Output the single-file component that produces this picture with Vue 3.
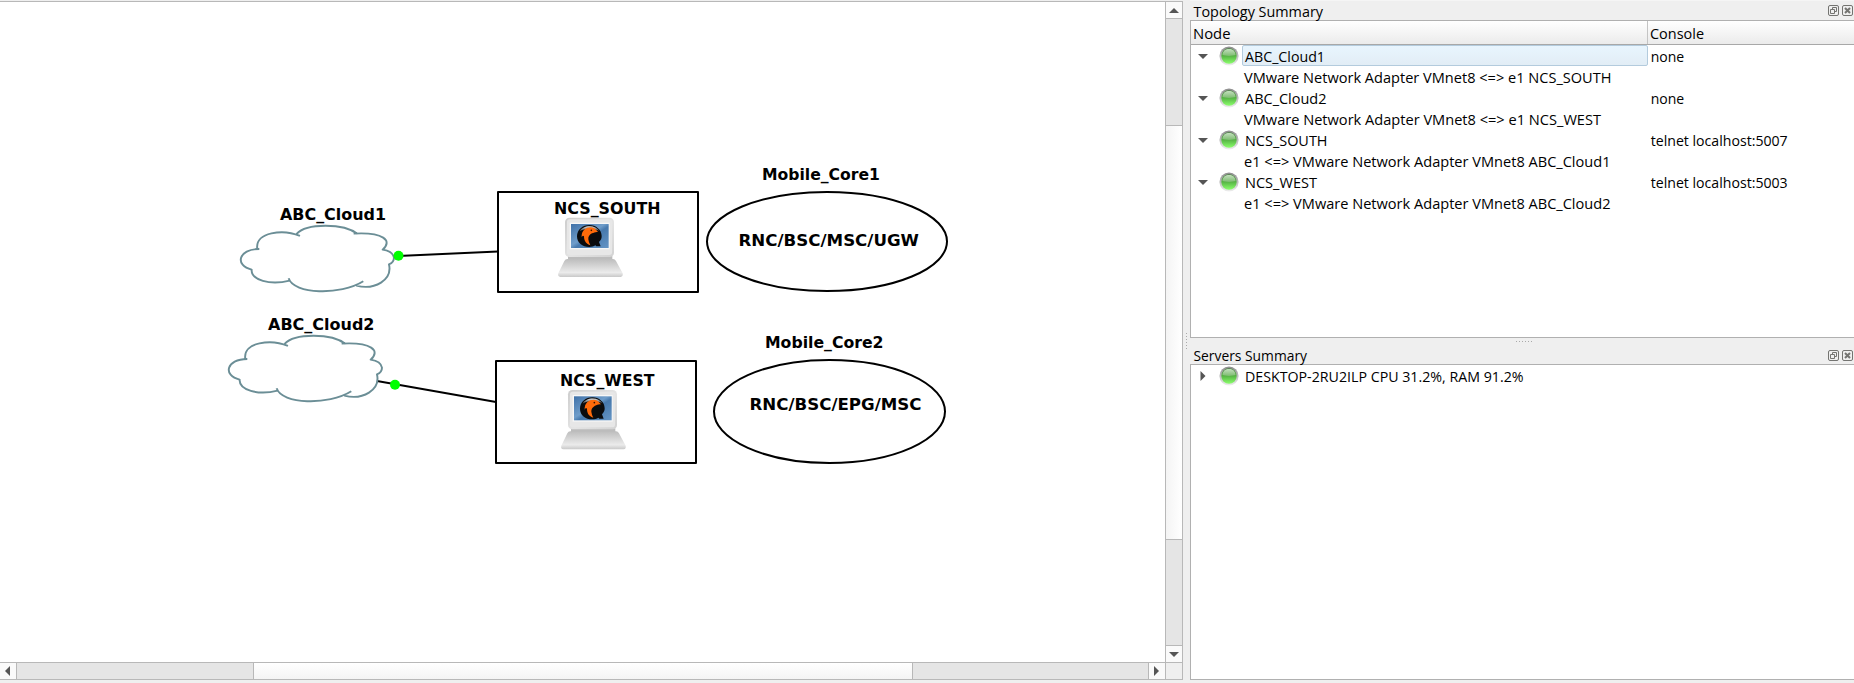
<script setup>
const topology = [
  { node: 'ABC_Cloud1', w: 80, console: 'none', cw: 33.5, selected: true },
  { link: 'VMware Network Adapter VMnet8 <=> e1 NCS_SOUTH', w: 367.5 },
  { node: 'ABC_Cloud2', w: 81.5, console: 'none', cw: 33.5 },
  { link: 'VMware Network Adapter VMnet8 <=> e1 NCS_WEST', w: 357 },
  { node: 'NCS_SOUTH', w: 82.5, console: 'telnet localhost:5007', cw: 137 },
  { link: 'e1 <=> VMware Network Adapter VMnet8 ABC_Cloud1', w: 366.5 },
  { node: 'NCS_WEST', w: 72, console: 'telnet localhost:5003', cw: 137 },
  { link: 'e1 <=> VMware Network Adapter VMnet8 ABC_Cloud2', w: 366.5 },
]
const labels = [
  { t: 'ABC_Cloud1', x: 280, y: 220, w: 106 },
  { t: 'ABC_Cloud2', x: 268, y: 330, w: 106.5 },
  { t: 'NCS_SOUTH', x: 554, y: 214, w: 106.5 },
  { t: 'NCS_WEST', x: 560, y: 386, w: 94.5 },
  { t: 'Mobile_Core1', x: 762, y: 180, w: 118 },
  { t: 'Mobile_Core2', x: 765, y: 348, w: 118.5 },
  { t: 'RNC/BSC/MSC/UGW', x: 738.5, y: 246, w: 180.5 },
  { t: 'RNC/BSC/EPG/MSC', x: 749.5, y: 410, w: 172 },
]
const clouds = [[220.3, 190.3], [208.3, 300.3]]
const computers = [[485, 180], [488, 352.3]]
</script>

<template>
  <div class="window">
    <svg class="defs" width="0" height="0" aria-hidden="true">
      <defs>
        <linearGradient id="ring" x1="0" y1="0" x2="0" y2="1">
          <stop offset="0" stop-color="#8c8c8c" /><stop offset=".5" stop-color="#bcbcbc" /><stop offset="1" stop-color="#efefef" />
        </linearGradient>
        <linearGradient id="bulb" x1="0" y1="0" x2="0" y2="1">
          <stop offset="0" stop-color="#3f7f36" /><stop offset=".5" stop-color="#57b545" /><stop offset="1" stop-color="#8bff6c" />
        </linearGradient>
        <linearGradient id="shine" x1="0" y1="0" x2="0" y2="1">
          <stop offset="0" stop-color="#c4dfbf" /><stop offset="1" stop-color="#7dbc70" />
        </linearGradient>
        <symbol id="led" viewBox="0 0 20 20">
          <circle cx="10" cy="10" r="9.6" fill="url(#ring)" />
          <circle cx="10" cy="10" r="7.7" fill="url(#bulb)" />
          <path d="M3.400 8.800C3.800 4.600 6.500 2.900 10 2.900S16.200 4.600 16.600 8.800C14.500 10.300 5.500 10.300 3.400 8.800Z" fill="url(#shine)" />
        </symbol>
        <symbol id="dock" viewBox="0 0 25 11">
          <g fill="none" stroke="#747471" stroke-width="1">
            <rect x=".5" y=".5" width="10" height="10" rx="1.500" />
            <rect x="14.500" y=".5" width="10" height="10" rx="1.500" />
            <path d="M4.500 4.500V2.500H8.500V6.500H6.500M2.500 4.500H6.500V8.500H2.500Z" />
            <path d="M17 3L22 8M22 3L17 8" stroke-width="2" />
          </g>
        </symbol>
      </defs>
    </svg>

    <main class="view">
      <svg class="scene" width="1165" height="660" viewBox="0 2 1165 660">
        <defs>
          <linearGradient id="case" x1="0" y1="0" x2="1" y2="1">
            <stop offset="0" stop-color="#cdcdcd" /><stop offset=".55" stop-color="#e4e4e4" /><stop offset="1" stop-color="#d2d2d2" />
          </linearGradient>
          <linearGradient id="base" x1="0" y1="0" x2="0" y2="1">
            <stop offset="0" stop-color="#bdbdbd" /><stop offset=".75" stop-color="#ebebeb" /><stop offset="1" stop-color="#c8c8c8" />
          </linearGradient>
          <linearGradient id="screen" x1="0" y1="0" x2="1" y2="1">
            <stop offset="0" stop-color="#3f71a8" /><stop offset=".45" stop-color="#6f9dca" /><stop offset=".55" stop-color="#4779ad" /><stop offset="1" stop-color="#6595c5" />
          </linearGradient>
          <linearGradient id="gloss" x1="0" y1="0" x2="0" y2="1">
            <stop offset="0" stop-color="#e8e8e8" /><stop offset="1" stop-color="#333" />
          </linearGradient>
        </defs>

        <g class="links">
          <path d="M398 256L498 251.500" />
          <path d="M377 381L496 402" />
        </g>
        <g class="shapes">
          <rect x="498" y="192" width="200" height="100" />
          <rect x="496" y="361" width="200" height="102" />
          <ellipse cx="827" cy="241.500" rx="120" ry="49.500" />
          <ellipse cx="829.500" cy="411.500" rx="115.500" ry="51.500" />
        </g>

        <g v-for="(c, i) in clouds" :key="i" :transform="`translate(${c[0]} ${c[1]}) scale(.33333)`">
          <path class="cloud" d="M117 176C53 176 43 226 94 238C92 269 148 286 208 271M205 264C220 312 360 316 429 273M408 286C464 300 517 269 506 222Q521 216 521 202Q518 183 487 178C518 151 489 125 400 130M412 131C370 98 258 98 229 131M239 137C190 116 103 124 111 176" />
        </g>
        <circle cx="398.500" cy="255.700" r="5" fill="#0f0" />
        <circle cx="395" cy="384.700" r="5" fill="#0f0" />

        <g v-for="(c, i) in computers" :key="'pc' + i" :transform="`translate(${c[0]} ${c[1]}) scale(.33333)`">
          <path d="M249 228H382V239H249Z" fill="#bcbcbc" />
          <path d="M247 237H384Q390 237 393 243L413 280Q415 290 407 291H226Q217 290 220 280L238 243Q241 237 247 237Z" fill="url(#base)" />
          <rect x="240" y="113" width="147" height="118" rx="13" fill="url(#case)" />
          <rect x="246" y="118" width="135" height="107" rx="8" fill="#e7e7e7" />
          <rect x="254" y="128" width="120" height="80" fill="#f7f7f7" />
          <rect x="258" y="132" width="113" height="72" fill="url(#screen)" />
          <path d="M313 135C293 135 276 149 276 169C276 189 292 201 313 201C320 201 326 199 331 196L334 199H347L342 186C348 180 350 175 350 168C350 149 333 135 313 135Z" fill="#0b0c0e" />
          <path d="M284 154C291 136 331 131 343 153C325 145 300 145 284 154Z" fill="url(#gloss)" />
          <path d="M290 172C289 152 302 142 318 142C328 143 333 149 339 156C331 155 327 158 321 160C314 164 309 170 310 178Q311 187 316 196C300 191 297 179 297 169Q293 164 290 172Z" fill="#ff6a0a" />
          <circle cx="319" cy="151" r="2.500" fill="#331400" />
        </g>

        <g class="labels">
          <text v-for="l in labels" :key="l.t" :x="l.x" :y="l.y" :textLength="l.w" lengthAdjust="spacingAndGlyphs">{{ l.t }}</text>
        </g>
      </svg>

      <div class="vbar">
        <div class="btn"><svg width="10" height="5"><path d="M0 5L5 0L10 5Z" /></svg></div>
        <div class="trough first"></div>
        <div class="handle"></div>
        <div class="trough"></div>
        <div class="btn"><svg width="10" height="5"><path d="M0 0L5 5L10 0Z" /></svg></div>
      </div>
      <div class="hbar">
        <div class="btn"><svg width="5" height="10"><path d="M5 0L0 5L5 10Z" /></svg></div>
        <div class="trough first"></div>
        <div class="handle"></div>
        <div class="trough"></div>
        <div class="btn"><svg width="5" height="10"><path d="M0 0L5 5L0 10Z" /></svg></div>
      </div>
      <div class="corner"></div>
    </main>

    <div class="split-v"><i></i></div>

    <aside class="docks">
      <header class="title">
        <svg class="txt" width="140" height="20"><text x="3.500" y="17" textLength="129.500" lengthAdjust="spacingAndGlyphs">Topology Summary</text></svg>
        <svg class="tools" width="25" height="11"><use href="#dock" /></svg>
      </header>
      <section class="tree topology">
        <div class="head">
          <div class="col-node"><svg class="txt" width="60" height="23"><text x="1" y="18" textLength="37.500" lengthAdjust="spacingAndGlyphs">Node</text></svg></div>
          <div class="col-console"><svg class="txt" width="80" height="23"><text x="1" y="18" textLength="54" lengthAdjust="spacingAndGlyphs">Console</text></svg></div>
        </div>
        <div v-for="(r, i) in topology" :key="i" class="row">
          <div class="gutter">
            <template v-if="r.node">
              <svg class="arrow down" width="10" height="5"><path d="M0 0H10L5 5Z" /></svg>
              <svg class="led" width="20" height="20"><use href="#led" /></svg>
            </template>
          </div>
          <div class="cell" :class="{ selected: r.selected }">
            <svg class="txt" width="403" height="21"><text :x="r.node ? 2 : 1" y="17" :textLength="r.w" lengthAdjust="spacingAndGlyphs">{{ r.node || r.link }}</text></svg>
          </div>
          <div v-if="r.console" class="console">
            <svg class="txt" width="180" height="21"><text x="2.700" y="17" :textLength="r.cw" lengthAdjust="spacingAndGlyphs">{{ r.console }}</text></svg>
          </div>
        </div>
      </section>
      <div class="split-h"><i></i></div>
      <header class="title servers-title">
        <svg class="txt" width="140" height="20"><text x="3.500" y="16" textLength="113.500" lengthAdjust="spacingAndGlyphs">Servers Summary</text></svg>
        <svg class="tools" width="25" height="11"><use href="#dock" /></svg>
      </header>
      <section class="tree servers">
        <div class="row">
          <div class="gutter">
            <svg class="arrow" width="10" height="10"><path d="M2.500 0L7.500 5L2.500 10Z" /></svg>
            <svg class="led" width="20" height="20"><use href="#led" /></svg>
          </div>
          <div class="cell"><svg class="txt" width="403" height="21"><text x="2" y="17" textLength="278.500" lengthAdjust="spacingAndGlyphs">DESKTOP-2RU2ILP CPU 31.2%, RAM 91.2%</text></svg></div>
        </div>
      </section>
    </aside>
  </div>
</template>

<style scoped>
.window {
  display: flex;
  width: 1854px;
  height: 683px;
  overflow: hidden;
  background: #efefef;
  font-family: "Open Sans", "Noto Sans", sans-serif;
}
.window * { box-sizing: border-box; }
svg { display: block; flex: none; }
.defs { position: absolute; }
.view {
  display: grid;
  grid-template-columns: 1165px 18px;
  grid-template-rows: 660px 18px;
  width: 1183px;
  height: 680px;
  margin-top: 1px;
  border-top: 1px solid #b8b8b8;
}
.scene { background: #fff; }
.links path { stroke: #000; stroke-width: 2; }
.shapes > * { fill: #fff; stroke: #000; stroke-width: 2; stroke-linejoin: round; }
.cloud { fill: none; stroke: #6b8e96; stroke-width: 5.800; stroke-linejoin: round; }
.labels text { font: bold 15.500px "DejaVu Sans", sans-serif; }
.vbar {
  display: flex;
  flex-direction: column;
  border: solid #b8b8b8;
  border-width: 0 1px;
}
.hbar {
  display: flex;
  border: solid #b8b8b8;
  border-width: 1px 0;
}
.corner { border: 1px solid #b8b8b8; background: #efefef; }
.btn {
  display: flex;
  flex: none;
  align-items: center;
  justify-content: center;
  background: #fafafa;
}
.btn path, .arrow path { fill: #555; }
.vbar .btn { height: 16px; }
.hbar .btn { width: 16px; padding-right: 1px; }
.trough { flex: 1; background: #e5e5e5; }
.vbar .trough { border: solid #b8b8b8; border-width: 1px 0; }
.vbar .first { flex: none; height: 108px; }
.vbar .handle { height: 413px; background: linear-gradient(90deg, #f4f4f4, #fff); }
.hbar .trough { border: solid #b8b8b8; border-width: 0 1px; }
.hbar .first { flex: none; width: 238px; }
.hbar .handle { width: 658px; background: linear-gradient(#fff, #f4f4f4); }
.split-v { width: 7px; display: flex; align-items: center; justify-content: center; }
.split-v i { width: 1px; height: 17px; background: repeating-linear-gradient(#aaa 0 1px, transparent 1px 3px); }
.docks { flex: 1; display: flex; flex-direction: column; border-top: 1px solid #f5f5f5; }
.title { display: flex; justify-content: space-between; height: 19px; position: relative; z-index: 1; }
.title .txt { margin-top: -1px; }
.tools { margin: 4px 1px 0 0; }
.txt { overflow: visible; }
.txt text { font-size: 15px; fill: #000; }
.tree { background: #fff; border: solid #b0b0b0; border-width: 1px 0 1px 1px; }
.topology { height: 318px; }
.servers { height: 316px; }
.head {
  display: flex;
  height: 24px;
  background: linear-gradient(#fff, #ebebeb);
  border-bottom: 1px solid #a8a8a8;
}
.col-node { width: 457px; padding-left: 1px; border-right: 1px solid #c4c4c4; }
.col-console { padding-left: 1px; }
.row { display: flex; height: 21px; }
.gutter { display: flex; align-items: center; gap: 11px; width: 51px; padding-left: 7px; }
.down { margin-top: 1px; }
.cell { width: 406px; height: 21px; padding-left: 1px; }
.selected {
  padding: 0;
  border: 1px solid #b3cbdd;
  border-radius: 2px;
  background: linear-gradient(#e8f5fe, #e2edf5);
}
.selected .txt { margin-top: -1px; }
.split-h { height: 8px; display: flex; justify-content: center; padding: 3px 0 0 4px; }
.split-h i { width: 17px; height: 1px; background: repeating-linear-gradient(90deg, #aaa 0 1px, transparent 1px 3px); }
.servers-title { height: 18px; }
</style>

<style>
html, body { overflow: hidden; background: #efefef; }
</style>
